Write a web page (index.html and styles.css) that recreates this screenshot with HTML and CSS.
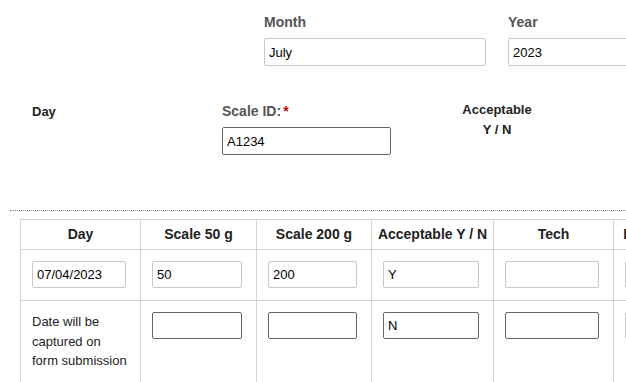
FILE: index.html
```html
<!DOCTYPE html>
<html lang="en">
<head>
  <meta charset="UTF-8">
  <meta name="viewport" content="width=device-width, initial-scale=1.0">
  <title>Scale Verification Log</title>
  <link rel="stylesheet" href="styles.css">
</head>
<body>

  <!-- Month / Year -->
  <div class="top-row">
    <div class="field month">
      <label for="month">Month</label>
      <input id="month" class="readonly" value="July" readonly />
    </div>
    <div class="field year">
      <label for="year">Year</label>
      <input id="year" class="readonly" value="2023" readonly />
    </div>
  </div>

  <!-- Day / Scale ID / Acceptable -->
  <div class="mid-row">
    <div class="day-label">Day</div>
    <div class="field scale-id">
      <label for="scale-id">Scale ID:<span class="req">*</span></label>
      <input id="scale-id" class="entry" value="A1234" />
    </div>
    <div class="accept-label">Acceptable<br>Y / N</div>
  </div>

  <div class="divider"></div>

  <!-- Readings table -->
  <table class="log">
    <colgroup>
      <col class="c-day">
      <col class="c-50">
      <col class="c-200">
      <col class="c-ok">
      <col class="c-tech">
      <col class="c-rev">
    </colgroup>
    <thead>
      <tr>
        <th>Day</th>
        <th>Scale 50 g</th>
        <th>Scale 200 g</th>
        <th>Acceptable Y / N</th>
        <th>Tech</th>
        <th>Reviewed By</th>
      </tr>
    </thead>
    <tbody>
      <tr>
        <td><input class="readonly" value="07/04/2023" readonly /></td>
        <td><input class="readonly" value="50" readonly /></td>
        <td><input class="readonly" value="200" readonly /></td>
        <td><input class="readonly" value="Y" readonly /></td>
        <td><input class="readonly" value="" readonly /></td>
        <td><input class="readonly" value="" readonly /></td>
      </tr>
      <tr>
        <td class="note">Date will be<br>captured on<br>form submission</td>
        <td><input class="entry" value="" /></td>
        <td><input class="entry" value="" /></td>
        <td><input class="entry" value="N" /></td>
        <td><input class="entry" value="" /></td>
        <td><input class="readonly" value="" readonly /></td>
      </tr>
    </tbody>
  </table>

</body>
</html>
```

FILE: styles.css
```css
/* Page */
html, body {
  overflow: hidden;
}

body {
  margin: 0;
  font-family: "Liberation Sans", Arial, sans-serif;
  color: #222;
  background-color: #fff;
}

input {
  box-sizing: border-box;
  height: 28px;
  padding: 0 4px;
  font-family: "Liberation Sans", Arial, sans-serif;
  font-size: 13px;
  color: #000;
  border-radius: 2px;
  background-color: #fff;
  outline: none;
}

input.readonly {
  border: 1px solid #c8c8c8;
}

input.entry {
  border: 1px solid #666;
}

/* Labelled fields */
.field label {
  display: block;
  margin-bottom: 8px;
  font-size: 14px;
  font-weight: bold;
  line-height: 16px;
  color: #555;
}

.req {
  color: #c00;
  margin-left: 2px;
}

.top-row {
  display: flex;
  gap: 22px;
  padding: 14px 0 0 264px;
}

.month input {
  width: 222px;
}

.year input {
  width: 200px;
}

.mid-row {
  display: flex;
  align-items: flex-start;
  margin-top: 37px;
  padding-left: 32px;
}

.day-label {
  width: 190px;
  margin-top: 1px;
  font-size: 13px;
  font-weight: bold;
  line-height: 16px;
}

.scale-id {
  width: 169px;
  margin-right: 71px;
}

.scale-id input {
  width: 100%;
}

.accept-label {
  width: 70px;
  margin-top: -3px;
  text-align: center;
  font-size: 13px;
  font-weight: bold;
  line-height: 20px;
}

.divider {
  margin: 55px 0 0 10px;
  border-top: 1px dotted #888;
}

/* Readings table */
table.log {
  margin: 8px 0 0 20px;
  width: 699px;
  table-layout: fixed;
  border-collapse: collapse;
}

.c-day { width: 120px; }
.c-50 { width: 116px; }
.c-200 { width: 115px; }
.c-ok { width: 122px; }
.c-tech { width: 120px; }
.c-rev { width: 106px; }

.log th,
.log td {
  border: 1px solid #d3d3d3;
}

.log th {
  padding: 6px 4px;
  font-size: 14px;
  font-weight: bold;
  line-height: 17px;
  white-space: nowrap;
  color: #222;
}

.log td {
  padding: 11px 14px 12px 11px;
  vertical-align: top;
}

.log td input {
  width: 100%;
  height: 27px;
}

.log td.note {
  padding-right: 4px;
  white-space: nowrap;
  font-size: 13px;
  line-height: 19.5px;
  color: #222;
}
```
